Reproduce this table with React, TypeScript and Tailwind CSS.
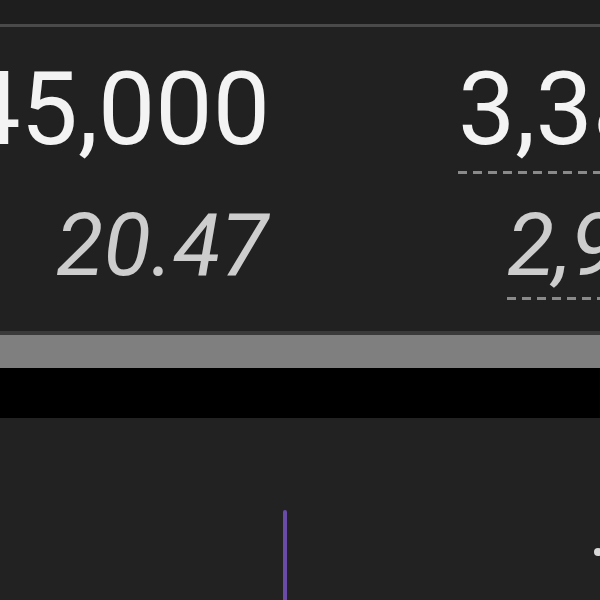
import React from "react";

const dash = "h-[3px] bg-[repeating-linear-gradient(90deg,#8a8a8a_0_9px,transparent_9px_15px)]";

export default function App() {
  return (
    <div className="w-[600px] h-[600px] overflow-hidden bg-[#212121] flex flex-col font-['Roboto',sans-serif]">
      <div className="h-[24px] shrink-0 bg-[#1e1e1e]" />
      <div className="h-[3px] shrink-0 bg-[#4a4a4a]" />
      <div className="h-[304px] shrink-0 flex flex-col">
        <div className="mt-[31px] flex items-start">
          <div className="w-[270px] shrink-0 flex justify-end overflow-visible">
            <span className="text-[102px] leading-none text-[#f3f3f3] whitespace-nowrap">45,000</span>
          </div>
          <div className="ml-[188px] flex flex-col shrink-0">
            <span className="text-[102px] leading-none text-[#f3f3f3] whitespace-nowrap">3,385</span>
            <div className={`mt-[11px] w-[200px] ${dash}`} />
          </div>
        </div>
        <div className="mt-[28px] flex items-start">
          <div className="w-[268px] shrink-0 flex justify-end">
            <span className="text-[87px] leading-none italic text-[#cdcdcd] whitespace-nowrap">20.47</span>
          </div>
          <div className="ml-[239px] flex flex-col shrink-0">
            <span className="text-[87px] leading-none italic text-[#cdcdcd] whitespace-nowrap">2,960</span>
            <div className={`mt-[8px] w-[200px] ${dash}`} />
          </div>
        </div>
      </div>
      <div className="h-[4px] shrink-0 bg-[#3a3a3a]" />
      <div className="h-[33px] shrink-0 bg-[#7f7f7f]" />
      <div className="h-[50px] shrink-0 bg-black" />
      <div className="relative flex-1 bg-[#222222]">
        <div className="absolute left-[283px] top-[92px] w-[4px] h-[120px] rounded-t-sm bg-[#6a4ca8]" />
        <div className="absolute left-[594px] top-[130px] w-[8px] h-[8px] rounded-full bg-[#d8d8d8]" />
      </div>
    </div>
  );
}
